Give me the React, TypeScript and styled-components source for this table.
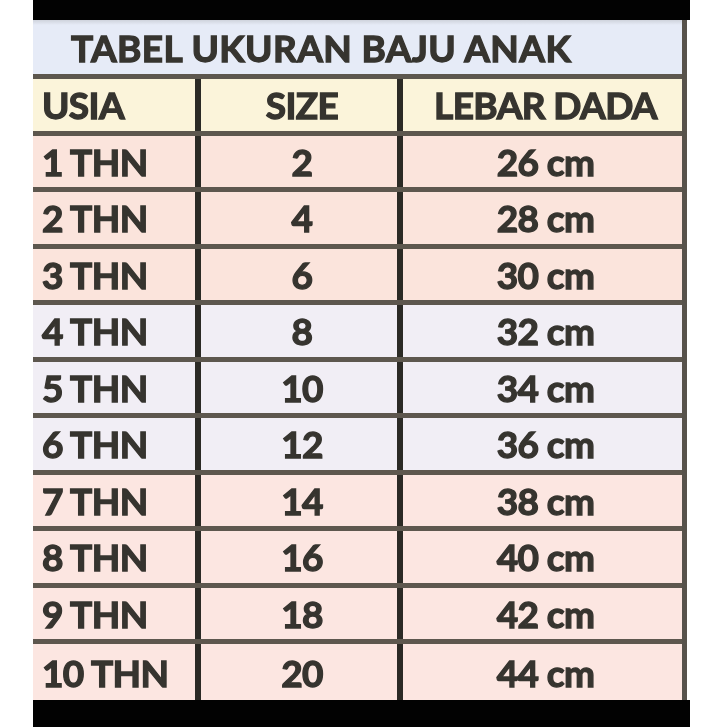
import React from "react"
import styled, { createGlobalStyle } from "styled-components"

const GlobalStyle = createGlobalStyle`
  html, body {
    margin: 0;
    padding: 0;
    background: #ffffff;
  }
`

type Tone = "header" | "peach" | "lilac" | "pink"

const tones: Record<Tone, string> = {
  header: "#fbf4da",
  peach: "#fbe4dc",
  lilac: "#f1eef5",
  pink: "#fce6e1",
}

const Page = styled.div`
  width: 727px;
  height: 727px;
  padding-left: 33px;
  box-sizing: border-box;
  display: flex;
  flex-direction: column;
  font-family: Lato, "Liberation Sans", sans-serif;
  font-weight: 700;
  color: #36342f;
  filter: blur(0.7px);
`

const BlackBand = styled.div<{ h: number }>`
  width: 657px;
  height: ${p => p.h}px;
  background: #020202;
  flex: none;
`

const Sheet = styled.div`
  width: 649px;
  border-right: 5px solid #57524b;
  box-sizing: content-box;
  display: flex;
  flex-direction: column;
`

const Title = styled.div`
  height: 59px;
  box-sizing: border-box;
  border-bottom: 5px solid #5d574e;
  background: linear-gradient(#cfd3dc 0px, #e6ebf7 5px, #e6ebf7 100%);
  padding-left: 38px;
  display: flex;
  align-items: center;
  font-size: 37px;
  letter-spacing: 0.4px;
  line-height: 1;
  -webkit-text-stroke: 1.3px #36342f;
`

const Row = styled.div<{ tone: Tone; last?: boolean }>`
  display: grid;
  grid-template-columns: 168px 202px 1fr;
  height: ${p => (p.last ? 56 : 56.5)}px;
  box-sizing: border-box;
  border-bottom: ${p => (p.last ? "none" : "5px solid #5d574e")};
  background: ${p => tones[p.tone]};
`

const Cell = styled.div<{ align: "left" | "center"; divider?: boolean }>`
  display: flex;
  align-items: center;
  justify-content: ${p => (p.align === "left" ? "flex-start" : "center")};
  padding-left: ${p => (p.align === "left" ? "9px" : "6px")};
  border-right: ${p => (p.divider ? "6px solid #2b2a25" : "none")};
  font-size: 37px;
  letter-spacing: -0.6px;
  line-height: 1;
  white-space: nowrap;
  -webkit-text-stroke: 1.3px #36342f;
`

const rows: [string, string, string, Tone][] = [
  ["1 THN", "2", "26 cm", "peach"],
  ["2 THN", "4", "28 cm", "peach"],
  ["3 THN", "6", "30 cm", "peach"],
  ["4 THN", "8", "32 cm", "lilac"],
  ["5 THN", "10", "34 cm", "lilac"],
  ["6 THN", "12", "36 cm", "lilac"],
  ["7 THN", "14", "38 cm", "pink"],
  ["8 THN", "16", "40 cm", "pink"],
  ["9 THN", "18", "42 cm", "pink"],
  ["10 THN", "20", "44 cm", "pink"],
]

export default function App() {
  return (
    <>
      <GlobalStyle />
      <Page>
        <BlackBand h={20} />
        <Sheet>
          <Title>TABEL UKURAN BAJU ANAK</Title>
          <Row tone="header">
            <Cell align="left" divider>USIA</Cell>
            <Cell align="center" divider>SIZE</Cell>
            <Cell align="center">LEBAR DADA</Cell>
          </Row>
          {rows.map(([age, size, chest, tone], i) => (
            <Row key={age} tone={tone} last={i === rows.length - 1}>
              <Cell align="left" divider>{age}</Cell>
              <Cell align="center" divider>{size}</Cell>
              <Cell align="center">{chest}</Cell>
            </Row>
          ))}
        </Sheet>
        <BlackBand h={27} />
      </Page>
    </>
  )
}
